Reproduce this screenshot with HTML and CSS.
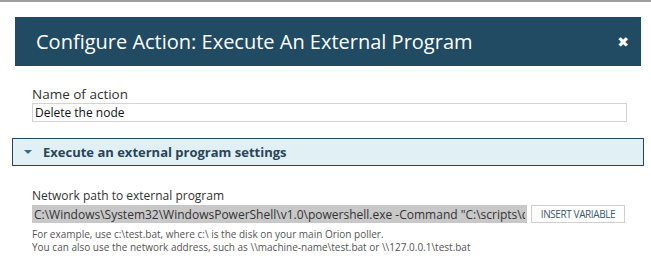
FILE: index.html
```html
<!DOCTYPE html>
<html lang="en">
<head>
    <meta charset="UTF-8">
    <title>Configure Action</title>
    <link rel="stylesheet" href="styles.css">
</head>
<body>
    <div class="topline"></div>

    <div class="dialog">
        <div class="dialog-header">
            <h1>Configure Action: Execute An External Program</h1>
            <span class="close">&#10006;</span>
        </div>

        <div class="field field-name">
            <label>Name of action</label>
            <input type="text" class="text-input" value="Delete the node">
        </div>

        <div class="section-bar">
            <span class="caret"></span>
            <span class="section-title">Execute an external program settings</span>
        </div>

        <div class="field field-path">
            <label>Network path to external program</label>
            <div class="path-row">
                <input type="text" class="path-input" value='C:\Windows\System32\WindowsPowerShell\v1.0\powershell.exe -Command "C:\scripts\delete-node.ps1"'>
                <button class="insert-btn">INSERT VARIABLE</button>
            </div>
            <p class="hint">For example, use c:\test.bat, where c:\ is the disk on your main Orion poller.<br>
            You can also use the network address, such as \\machine-name\test.bat or \\127.0.0.1\test.bat</p>
        </div>
    </div>
</body>
</html>
```

FILE: styles.css
```css
body {
    margin: 0;
    background: #fff;
    font-family: "Open Sans", "Liberation Sans", sans-serif;
    color: #333;
}
.topline {
    height: 2px;
    background-color: #9e9e9e;
}
.dialog {
    padding: 15px 0 0 12px;
    width: 632px;
}
.dialog-header {
    margin-left: 3px;
    width: 626px;
    height: 49px;
    background-color: #214a63;
    display: flex;
    align-items: center;
    justify-content: space-between;
    padding: 0 12px 0 21px;
    box-sizing: border-box;
}
.dialog-header h1 {
    margin: 0;
    font-size: 20px;
    font-weight: normal;
    color: #fff;
}
.close {
    color: #fff;
    font-family: "DejaVu Sans", sans-serif;
    font-size: 14px;
    font-weight: bold;
}
.field {
    display: flex;
    flex-direction: column;
    padding-left: 20px;
}
.field label {
    font-size: 12px;
    line-height: 16px;
    color: #333;
}
.field-name {
    padding-top: 20px;
}
.field-name label {
    font-size: 13.5px;
    line-height: 16px;
}
.text-input {
    width: 595px;
    height: 19px;
    margin: 1px 0 0;
    padding: 0 2px;
    box-sizing: border-box;
    border: 1px solid #d3d3d3;
    font-family: inherit;
    font-size: 12px;
    color: #111;
    outline: none;
}
.section-bar {
    margin-top: 16px;
    height: 28px;
    box-sizing: border-box;
    border: 1px solid #1f4a60;
    background-color: #e1f0f5;
    display: flex;
    align-items: center;
    padding-left: 11px;
}
.caret {
    width: 0;
    height: 0;
    border-left: 4px solid transparent;
    border-right: 4px solid transparent;
    border-top: 4px solid #2f6b8c;
    margin-right: 11px;
}
.section-title {
    font-size: 13px;
    font-weight: bold;
    color: #2a4558;
}
.field-path {
    padding-top: 22px;
}
.path-row {
    display: flex;
    align-items: center;
    gap: 4px;
    margin-top: 1px;
}
.path-input {
    width: 495px;
    height: 18px;
    margin: 0;
    padding: 0 2px;
    box-sizing: border-box;
    border: none;
    background-color: #c8c8c8;
    font-family: inherit;
    font-size: 12px;
    color: #333;
    outline: none;
}
.insert-btn {
    width: 94px;
    height: 18px;
    margin: 0;
    padding: 0;
    border: 1px solid #cfcfcf;
    background: #fff;
    font-family: inherit;
    font-size: 10px;
    letter-spacing: -0.4px;
    color: #3b5a74;
}
.hint {
    margin: 5px 0 0;
    font-size: 10px;
    line-height: 12.5px;
    color: #555;
}
```
